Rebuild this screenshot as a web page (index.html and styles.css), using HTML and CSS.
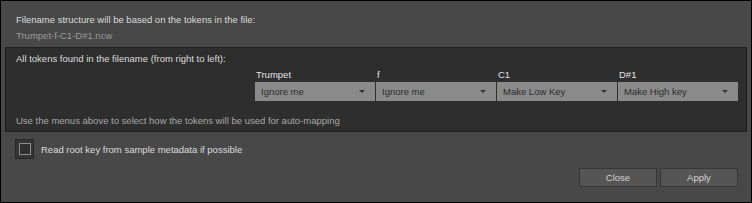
FILE: index.html
```html
<!doctype html>
<html>
    <head>
        <link rel="stylesheet" href="styles.css">
    </head>
    <body>
        <div class="window">
            <div class="header">
                <div class="line">Filename structure will be based on the tokens in the file:</div>
                <div class="line filename">Trumpet-f-C1-D#1.ncw</div>
            </div>

            <div class="panel">
                <div class="line">All tokens found in the filename (from right to left):</div>
                <div class="tokens">
                    <div class="token">
                        <div class="token-name">Trumpet</div>
                        <div class="dropdown"><span>Ignore me</span><i class="arrow"></i></div>
                    </div>
                    <div class="token">
                        <div class="token-name">f</div>
                        <div class="dropdown"><span>Ignore me</span><i class="arrow"></i></div>
                    </div>
                    <div class="token">
                        <div class="token-name">C1</div>
                        <div class="dropdown"><span>Make Low Key</span><i class="arrow"></i></div>
                    </div>
                    <div class="token">
                        <div class="token-name">D#1</div>
                        <div class="dropdown"><span>Make High key</span><i class="arrow"></i></div>
                    </div>
                </div>
                <div class="line hint">Use the menus above to select how the tokens will be used for auto-mapping</div>
            </div>

            <label class="check-row">
                <span class="checkbox"><span class="check-inner"></span></span>
                <span>Read root key from sample metadata if possible</span>
            </label>

            <div class="buttons">
                <button>Close</button>
                <button>Apply</button>
            </div>
        </div>
    </body>
</html>
```

FILE: styles.css
```css
body {
    margin: 0;
    background: #000;
}
.window {
    width: 752px;
    height: 203px;
    box-sizing: border-box;
    border: 1px solid #000;
    background: #484848;
    font-family: "Liberation Sans", Arial, sans-serif;
    font-size: 9.5px;
    color: #dcdcdc;
    overflow: hidden;
}
.line {
    line-height: 12px;
    height: 12px;
    white-space: nowrap;
}
.header {
    padding: 13px 0 0 15px;
}
.header .filename {
    margin-top: 4px;
    color: #9c9c9c;
}
.panel {
    margin: 5px 4px 0 4px;
    border: 1px solid #1e1e1e;
    background: #2e2e2e;
    padding: 5px 0 4px 10px;
}
.tokens {
    display: grid;
    grid-template-columns: repeat(4, 120px);
    column-gap: 1px;
    margin: 4px 0 0 239px;
}
.token-name {
    line-height: 12px;
    height: 12px;
    padding-left: 1px;
    color: #e4e4e4;
}
.dropdown {
    margin-top: 1px;
    height: 19px;
    background: #8a8a8a;
    color: #2c2c2c;
    display: flex;
    align-items: center;
    justify-content: space-between;
    padding: 0 10px 0 6px;
}
.arrow {
    width: 0;
    height: 0;
    border-left: 3px solid transparent;
    border-right: 3px solid transparent;
    border-top: 3px solid #333;
}
.hint {
    margin-top: 14px;
    color: #a8a8a8;
}
.check-row {
    display: flex;
    align-items: center;
    gap: 7px;
    margin: 7px 0 0 14px;
    height: 20px;
}
.checkbox {
    width: 19px;
    height: 20px;
    box-sizing: border-box;
    border: 1px solid #262626;
    background: #353535;
    display: flex;
    align-items: center;
    justify-content: center;
}
.check-inner {
    width: 12px;
    height: 12px;
    box-sizing: border-box;
    border: 1px solid #8c8c8c;
    background: #303030;
}
.buttons {
    display: flex;
    justify-content: flex-end;
    gap: 3px;
    margin-top: 9px;
    padding-right: 13px;
}
button {
    width: 78px;
    height: 19px;
    box-sizing: border-box;
    border: 1px solid #373737;
    background: #555;
    color: #d4d4d4;
    font-family: "Liberation Sans", Arial, sans-serif;
    font-size: 9.5px;
    padding: 0;
}
```
